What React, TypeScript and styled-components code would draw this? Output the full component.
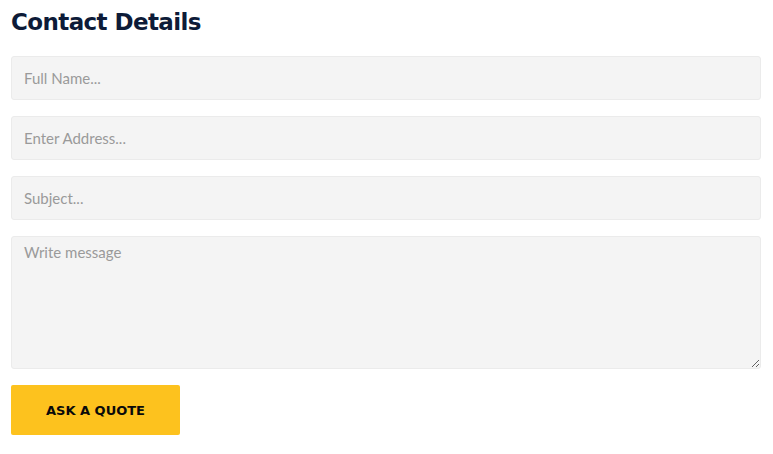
import React from "react";
import styled, { createGlobalStyle } from "styled-components";

const Global = createGlobalStyle`
  html, body { margin: 0; padding: 0; background: #fff; }
  * { box-sizing: border-box; }
`;

const Wrap = styled.div`
  padding: 6px 12px 0 11px;
  display: flex;
  flex-direction: column;
`;

const Title = styled.h2`
  margin: 0 0 18px 0;
  font-family: "DejaVu Sans", "Lato", sans-serif;
  font-weight: 700;
  font-size: 23px;
  line-height: 32px;
  color: #0d1b38;
  letter-spacing: -0.6px;
`;

const Form = styled.form`
  display: flex;
  flex-direction: column;
  gap: 16px;
`;

const fieldBase = `
  width: 100%;
  background: #f4f4f4;
  border: 1px solid #ebebeb;
  border-radius: 3px;
  font-family: "Lato", "Open Sans", sans-serif;
  font-size: 15px;
  color: #333;
  outline: none;
  padding: 0 12px;
  &::placeholder { color: #9a9a9a; }
`;

const Input = styled.input`
  ${fieldBase}
  height: 44px;
`;

const TextArea = styled.textarea`
  ${fieldBase}
  height: 133px;
  padding-top: 6px;
  resize: vertical;
  display: block;
`;

const Button = styled.button`
  width: 169px;
  height: 50px;
  background: #fdc21e;
  border: none;
  border-radius: 2px;
  font-family: "DejaVu Sans", "Lato", sans-serif;
  font-weight: 700;
  font-size: 13px;
  color: #0a0a0a;
  letter-spacing: 0;
  cursor: pointer;
`;

export default function App() {
  return (
    <>
      <Global />
      <Wrap>
        <Title>Contact Details</Title>
        <Form onSubmit={(e) => e.preventDefault()}>
          <Input placeholder="Full Name..." />
          <Input placeholder="Enter Address..." />
          <Input placeholder="Subject..." />
          <TextArea placeholder="Write message" />
          <Button type="submit">ASK A QUOTE</Button>
        </Form>
      </Wrap>
    </>
  );
}
